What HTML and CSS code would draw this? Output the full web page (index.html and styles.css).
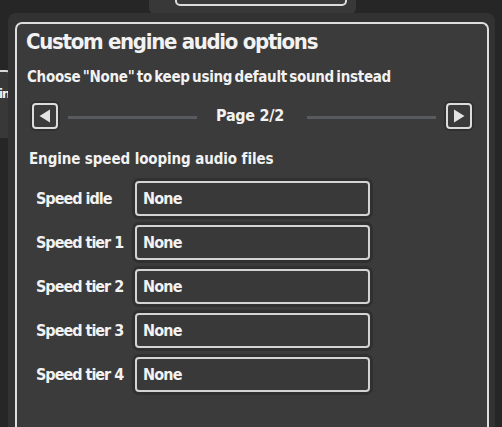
FILE: index.html
```html
<!DOCTYPE html>
<html>
<head>
<meta charset="utf-8">
<link rel="stylesheet" href="styles.css">
</head>
<body>
<div class="bg-window bg-top"><div class="bg-top-inner"></div></div>
<div class="bg-window bg-left"><span class="bg-left-text">in</span></div>
<div class="frame">
  <div class="panel">
    <h1 class="title">Custom engine audio options</h1>
    <p class="subtitle">Choose "None" to keep using default sound instead</p>
    <div class="pager">
      <div class="nav-btn"><svg width="12" height="14" viewBox="0 0 12 14"><path d="M11 0.5 L11 13.5 L0.5 7 Z" fill="#e4e4e4"/></svg></div>
      <div class="rule"></div>
      <span class="page">Page 2/2</span>
      <div class="rule"></div>
      <div class="nav-btn"><svg width="12" height="14" viewBox="0 0 12 14"><path d="M1 0.5 L1 13.5 L11.5 7 Z" fill="#e4e4e4"/></svg></div>
    </div>
    <h2 class="section">Engine speed looping audio files</h2>
    <div class="rows">
      <div class="row"><span class="label">Speed idle</span><div class="field">None</div></div>
      <div class="row"><span class="label">Speed tier 1</span><div class="field">None</div></div>
      <div class="row"><span class="label">Speed tier 2</span><div class="field">None</div></div>
      <div class="row"><span class="label">Speed tier 3</span><div class="field">None</div></div>
      <div class="row"><span class="label">Speed tier 4</span><div class="field">None</div></div>
    </div>
  </div>
</div>
</body>
</html>
```
FILE: styles.css
```css
html, body {
  margin: 0;
  padding: 0;
}
body {
  width: 502px;
  height: 427px;
  overflow: hidden;
  background: #262626;
  position: relative;
  font-family: "DejaVu Sans Condensed", "DejaVu Sans", sans-serif;
  font-weight: bold;
  color: #f2f2f2;
}
.bg-window {
  position: absolute;
  background: #383838;
}
.bg-top {
  left: 149px;
  top: -20px;
  width: 207px;
  height: 34px;
  border-radius: 6px;
}
.bg-top-inner {
  position: absolute;
  left: 26px;
  top: 0;
  width: 168px;
  height: 22px;
  border: 2px solid #dcdcdc;
  border-radius: 5px;
  background: #3a3a3a;
}
.bg-left {
  left: -60px;
  top: 70px;
  width: 70px;
  height: 66px;
  border-top: 2px solid #d8d8d8;
  border-radius: 4px;
}
.bg-left-text {
  position: absolute;
  left: 59px;
  top: 14px;
  font-size: 13px;
  letter-spacing: -1px;
}
.frame {
  position: relative;
  margin-left: 8px;
  margin-top: 13px;
  width: 487px;
  height: 430px;
  background: #323232;
  border-radius: 8px 8px 0 0;
  padding-top: 9px;
  box-sizing: border-box;
}
.panel {
  margin: 0 6px 0 7px;
  height: 420px;
  border: 2px solid #dedede;
  border-bottom: none;
  border-radius: 7px 7px 0 0;
  background: #3b3b3b;
  box-sizing: border-box;
}
.title {
  margin: 0;
  padding: 5px 0 0 9px;
  font-size: 22px;
  line-height: 26px;
  letter-spacing: -1.3px;
  font-weight: bold;
}
.subtitle {
  margin: 0;
  padding: 13px 0 0 10px;
  font-size: 15px;
  line-height: 18px;
  letter-spacing: -0.3px;
  word-spacing: -2px;
}
.pager {
  display: flex;
  align-items: center;
  gap: 10px;
  margin-top: 17px;
  padding: 0 15px;
  height: 26px;
}
.nav-btn {
  width: 26px;
  height: 26px;
  box-sizing: border-box;
  border: 2px solid #dcdcdc;
  border-radius: 4px;
  background: #3b3b3b;
  box-shadow: 0 0 0 2px #303030;
  display: flex;
  align-items: center;
  justify-content: center;
  flex: none;
}
.rule {
  flex: 1;
  height: 3px;
  background: #575b5f;
  margin-top: 3px;
}
.page {
  font-size: 16px;
  line-height: 20px;
  letter-spacing: -0.3px;
  margin: 0 13px 0 9px;
}
.section {
  margin: 0;
  padding: 21px 0 0 12px;
  font-size: 15px;
  line-height: 18px;
  letter-spacing: -0.1px;
}
.rows {
  display: flex;
  flex-direction: column;
  gap: 9px;
  margin-top: 13px;
  padding-left: 19px;
}
.row {
  display: flex;
  align-items: center;
  height: 35px;
}
.label {
  width: 99px;
  flex: none;
  font-size: 16px;
  letter-spacing: -1px;
  white-space: nowrap;
}
.field {
  width: 235px;
  height: 35px;
  box-sizing: border-box;
  border: 2px solid #d4d4d4;
  border-radius: 4px;
  background: #393939;
  box-shadow: 0 0 0 3px #303030;
  padding-left: 6px;
  display: flex;
  align-items: center;
  font-size: 16px;
  letter-spacing: -0.8px;
}
```
